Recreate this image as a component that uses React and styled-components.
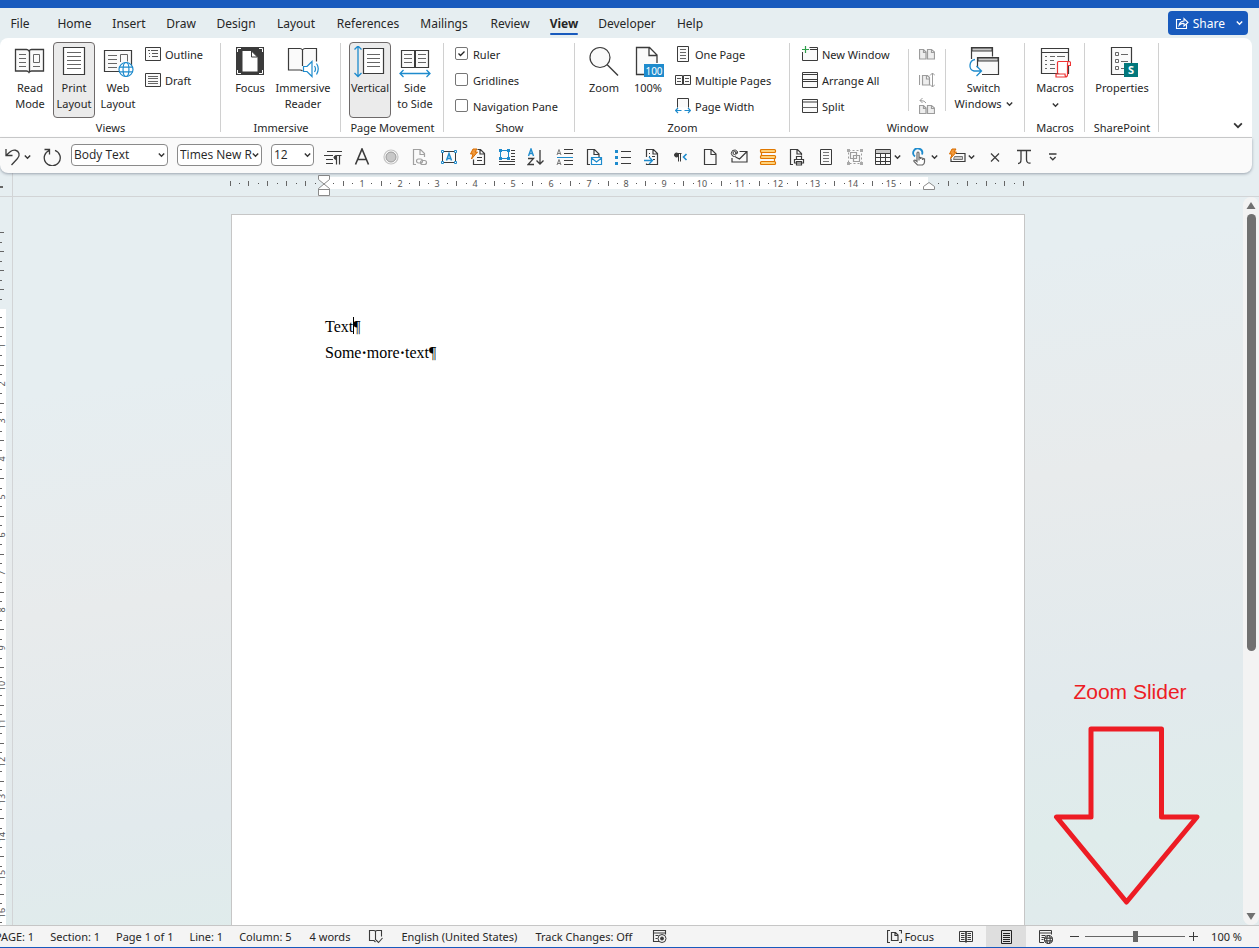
import React, { useState } from 'react';
import styled, { createGlobalStyle } from 'styled-components';

const GlobalStyle = createGlobalStyle`
    * { box-sizing: border-box; }
    body {
        margin: 0;
        font-family: "Noto Sans", "Open Sans", sans-serif;
        font-size: 11px;
        color: #262626;
    }
    button, select, input {
        font-family: inherit;
        font-size: inherit;
        color: inherit;
        margin: 0;
    }
`;

const Window = styled.div`
    min-height: 100vh;
    display: flex;
    flex-direction: column;
    overflow: hidden;
    border-top: 8px solid #185abd;
    border-bottom: 1px solid #185abd;
    background: linear-gradient(172deg, #e6eef1 0%, #e6eef1 35%, #e8ebec 55%, #e2eaed 75%, #dfeceb 88%, #e1eaed 100%);
`;

/* ---- tabs ---- */
const TabBar = styled.nav`
    display: flex;
    align-items: center;
    height: 30px;
    padding: 0 11px 0 0;
`;

const Tab = styled.a`
    position: relative;
    width: ${(p) => p.$w}px;
    text-align: center;
    font-size: 12px;
    line-height: 28px;
    padding-top: 2px;
    color: #262626;
    text-decoration: none;
    font-weight: ${(p) => (p.$active ? 700 : 400)};
    &::after {
        content: "";
        display: ${(p) => (p.$active ? 'block' : 'none')};
        position: absolute;
        left: 15px;
        right: 15px;
        bottom: 3px;
        height: 2px;
        border-radius: 1px;
        background: #185abd;
    }
`;

const ShareButton = styled.button`
    display: flex;
    align-items: center;
    gap: 4px;
    height: 24px;
    margin-left: auto;
    padding: 0 5px 0 7px;
    border: 0;
    border-radius: 4px;
    background: #185abd;
    color: #fff;
    font-size: 12px;
    svg:last-child { margin-left: 7px; }
`;

/* ---- ribbon ---- */
const Ribbon = styled.section`
    display: flex;
    height: 100px;
    margin-right: 7px;
    padding-top: 4px;
    background: #fff;
    border-bottom: 1px solid #d0d0d0;
    border-radius: 8px 8px 0 0;
`;

const Group = styled.div`
    position: relative;
    width: ${(p) => p.$w}px;
    height: 94px;
    flex: none;
    display: flex;
    flex-direction: column;
    &::after {
        content: "";
        position: absolute;
        right: 0;
        top: 1px;
        bottom: 4px;
        width: 1px;
        background: #d0d0d0;
    }
`;

const GroupBody = styled.div`
    display: flex;
    gap: 2px;
    height: 78px;
    padding-left: ${(p) => p.$pad || 8}px;
`;

const GroupLabel = styled.div`
    text-align: center;
    line-height: 16px;
`;

const BigButton = styled.button`
    width: ${(p) => p.$w || 42}px;
    height: 76px;
    display: flex;
    flex-direction: column;
    align-items: center;
    padding: 3px 0 0;
    line-height: 16px;
    white-space: nowrap;
    border: 1px solid ${(p) => (p.$on ? '#6e6a6a' : 'transparent')};
    border-radius: 4px;
    background: ${(p) => (p.$on ? '#ebebeb' : 'transparent')};
    svg { flex: none; }
    > svg:first-child { margin-bottom: 2px; }
`;

const Inline = styled.span`
    display: inline-flex;
    align-items: center;
    gap: 4px;
`;

const Stack = styled.div`
    display: flex;
    flex-direction: column;
    margin-top: -1px;
    margin-left: ${(p) => p.$left || 0}px;
`;

const SmallButton = styled.button`
    height: 26px;
    display: flex;
    align-items: center;
    gap: 4px;
    padding: 0;
    border: 0;
    background: none;
    white-space: nowrap;
    svg { flex: none; }
`;

const Check = styled.label`
    height: 26px;
    display: flex;
    align-items: center;
    gap: 5px;
    white-space: nowrap;
    input {
        appearance: none;
        width: 13px;
        height: 13px;
        margin-bottom: 2px;
        border: 1px solid #767676;
        border-radius: 2px;
        background: #fff;
    }
    input:checked {
        background: url("data:image/svg+xml,%3Csvg xmlns='http://www.w3.org/2000/svg' viewBox='0 0 11 11'%3E%3Cpath d='M2.5 5.5l2 2 4-4' fill='none' stroke='%23222' stroke-width='1.3'/%3E%3C/svg%3E");
    }
`;

const Divider = styled.div`
    width: 1px;
    height: 62px;
    margin: 7px 0 0 ${(p) => p.$left}px;
    background: #d0d0d0;
`;

const Collapse = styled.button`
    align-self: flex-end;
    margin: 0 7px 3px auto;
    padding: 0;
    width: 14px;
    height: 18px;
    border: 0;
    background: none;
`;

/* ---- quick access toolbar ---- */
const Toolbar = styled.section`
    display: flex;
    align-items: center;
    height: 35px;
    margin-right: 7px;
    padding: 2px 0 0 1px;
    background: #fafafa;
    border-radius: 0 0 8px 8px;
    box-shadow: 0 1px 3px rgba(60, 70, 90, 0.45);
    position: relative;
`;

const Tool = styled.button`
    width: ${(p) => p.$w || 29}px;
    height: 28px;
    flex: none;
    display: flex;
    align-items: center;
    justify-content: center;
    gap: 2px;
    padding: 0;
    border: 0;
    background: none;
`;

const Combos = styled.div`
    display: flex;
    gap: 9px;
    flex: none;
    margin: 0 4px 4px 1px;
`;

const Combo = styled.div`
    position: relative;
    width: ${(p) => p.$w}px;
    select {
        appearance: none;
        display: block;
        width: 100%;
        height: 22px;
        padding: 0 9px 0 2px;
        border: 1px solid #8a8a8a;
        border-radius: 4px;
        background: #fff;
        font-family: "Open Sans", sans-serif;
        font-size: 12px;
        white-space: nowrap;
        text-overflow: clip;
    }
    svg {
        position: absolute;
        right: 3px;
        top: 8px;
        pointer-events: none;
    }
`;

/* ---- rulers and document ---- */
const RulerRow = styled.div`
    display: flex;
    height: 24px;
    border-bottom: 1px solid #d2d4d6;
`;

const RulerCorner = styled.div`
    width: 13px;
    flex: none;
    border-right: 1px solid #d2d4d6;
    &::before {
        content: "";
        display: block;
        width: 3px;
        height: 2px;
        margin-top: 13px;
        background: #666;
    }
`;

const RulerTrack = styled.div`
    flex: 1;
    display: flex;
    justify-content: center;
    padding-right: 16px;
    svg { overflow: visible; }
`;

const Workspace = styled.div`
    flex: 1;
    display: flex;
    position: relative;
    min-height: 300px;
`;

const SideRuler = styled.div`
    width: 13px;
    flex: none;
    border-right: 1px solid #d2d4d6;
    position: relative;
    overflow: hidden;
    svg { position: absolute; left: 0; top: 0; }
`;

const Canvas = styled.main`
    flex: 1;
    display: flex;
    justify-content: center;
    padding-top: 17px;
`;

const Page = styled.article`
    width: 794px;
    padding: 99px 93px 0;
    background: #fff;
    border: 1px solid #c6c6c6;
    border-bottom: 0;
    font-family: "Liberation Serif", serif;
    font-size: 16px;
    line-height: 26px;
    color: #000;
    p { margin: 0; }
`;

const SpaceMark = styled.span`
    font-weight: 700;
`;

const Caret = styled.i`
    display: inline-block;
    width: 1px;
    height: 17px;
    margin-right: -1px;
    vertical-align: -2px;
    background: #000;
`;

const ScrollBar = styled.div`
    width: 16px;
    flex: none;
    display: flex;
    flex-direction: column;
    align-items: center;
    padding: 5px 0 5px;
    background: #f3f3f3;
    border-radius: 8px;
`;

const ScrollThumb = styled.div`
    width: 9px;
    flex: 0 1 437px;
    margin: 4px 0 auto;
    border-radius: 5px;
    background: #707070;
`;

const Callout = styled.div`
    position: absolute;
    right: 59px;
    bottom: 18px;
    width: 148px;
    display: flex;
    flex-direction: column;
    align-items: center;
    gap: 21px;
    font-family: "Liberation Sans", sans-serif;
    font-size: 21px;
    line-height: 24px;
    color: #ed1c24;
    span { margin-left: 8px; }
`;

/* ---- status bar ---- */
const StatusBar = styled.footer`
    display: flex;
    align-items: center;
    height: 22px;
    background: #f4f4f4;
    border-top: 1px solid #c6c6c6;
    white-space: nowrap;
    overflow: hidden;
`;

const StatusItem = styled.button`
    height: 21px;
    display: flex;
    align-items: center;
    gap: 2px;
    padding: 0;
    margin-left: ${(p) => (p.$push ? 'auto' : `${p.$left}px`)};
    margin-right: ${(p) => p.$right || 0}px;
    border: 0;
    background: none;
    line-height: 20px;
`;

const ViewButton = styled.button`
    width: 40px;
    height: 21px;
    flex: none;
    display: flex;
    align-items: center;
    justify-content: center;
    padding: 0;
    border: 0;
    background: ${(p) => (p.$on ? '#dedede' : 'none')};
`;

const ZoomControl = styled.div`
    display: flex;
    align-items: center;
    gap: 4px;
    margin-left: 4px;
    button {
        width: 11px;
        height: 20px;
        padding: 0;
        border: 0;
        background: none;
        display: flex;
        align-items: center;
    }
    input {
        appearance: none;
        width: 100px;
        height: 12px;
        background: linear-gradient(#666, #666) center / 100% 1px no-repeat;
    }
    input::-webkit-slider-thumb {
        appearance: none;
        width: 5px;
        height: 11px;
        background: #666;
    }
`;

const D = '#3b3b3b';
const B = '#1e8bcd';

function Icon({ w = 16, h = w, c = D, children }) {
    return (
        <svg width={w} height={h} viewBox={`0 0 ${w} ${h}`} fill="none" stroke={c} aria-hidden="true">
            {children}
        </svg>
    );
}

const Chevron = ({ w = 7, c = '#333', t = 1.4 }) => (
    <svg width={w} height={w - 1} viewBox="0 0 7 6" fill="none" stroke={c} strokeWidth={t} aria-hidden="true">
        <path d="M.8 1.5l2.7 2.7 2.7-2.7" />
    </svg>
);

const Globe = ({ x, y, r, c = B, t = 1.2 }) => (
    <g stroke={c} strokeWidth={t}>
        <circle cx={x} cy={y} r={r} fill="#fff" />
        <ellipse cx={x} cy={y} rx={r * 0.42} ry={r} />
        <path d={`M${x - r} ${y - r * 0.35}h${2 * r}M${x - r} ${y + r * 0.35}h${2 * r}`} />
    </g>
);

/* large ribbon icons */
const ReadMode = () => (
    <Icon w={32}>
        <path d="M1.500 3.500h11q1.500 0 2.500 1.500q1-1.500 2.500-1.500h12v21.500h-12q-1.500 0-2.500 1.500q-1-1.500-2.500-1.500h-11z" fill="#fafafa" strokeWidth="1.300" />
        <path d="M15.500 5v21" strokeWidth="1.300" />
        <path d="M5 8.500h7M5 12.500h7M5 16.500h7M5 20.500h7M19 20.500h7M19.500 8.500h6v8h-6z" stroke="#666" />
    </Icon>
);

const PrintLayout = () => (
    <Icon w={32}>
        <path d="M5.500 1.500h21v27h-21z" fill="#fff" strokeWidth="1.200" />
        <path d="M9 6.500h14M9 10.500h14M9 14.500h14M9 18.500h14M9 22.500h14" stroke="#666" />
    </Icon>
);

const WebLayout = () => (
    <Icon w={32}>
        <path d="M2.500 4.500h27v21h-27z" fill="#fafafa" strokeWidth="1.200" />
        <path d="M6 9.500h9M6 13.500h9M6 17.500h9M6 21.500h9M18.500 16v-7.500h7v7" stroke="#666" />
        <Globe x={24} y={23.500} r={7} />
    </Icon>
);

const FocusMode = () => (
    <Icon w={32}>
        <path d="M2 1h28v28h-28z" fill={D} stroke="none" />
        <path d="M3.500 6v-3.500h3.500M25 2.500h3.500v3.500M3.500 24v3.500h3.500M25 27.500h3.500v-3.500" stroke="#fff" />
        <path d="M8.500 5h9l6 6v14.500h-15z" fill="#fff" stroke="none" />
        <path d="M17.500 5v6h6z" stroke={D} />
    </Icon>
);

const ImmersiveReader = () => (
    <Icon w={32}>
        <path d="M15.500 25q-1-1-2.500-1h-11.500v-21.500h11.500q1.500 0 2.500 1.500q1-1.500 2.500-1.500h11.500v13M15.500 4v16" fill="#fafafa" strokeWidth="1.200" />
        <path d="M16.500 20.500h3.500l5-5v15l-5-5h-3.500z" fill="#fff" stroke={B} strokeWidth="1.200" />
        <path d="M27.500 20q2 3 0 6M29.500 17.500q3.500 5 0 11" stroke={B} strokeWidth="1.200" />
    </Icon>
);

const Vertical = () => (
    <Icon w={32}>
        <path d="M9.500 2.500h20v25h-20z" fill="#fff" strokeWidth="1.200" />
        <path d="M13 8.500h13M13 12.500h13M13 16.500h13M13 20.500h13" stroke="#666" />
        <path d="M4 .5v29.500M.5 3.500l3.500-3.500l3.500 3.500M.5 27l3.500 3.500l3.500-3.500" stroke={B} strokeWidth="1.300" />
    </Icon>
);

const SideToSide = () => (
    <Icon w={32}>
        <path d="M2.500 4.500h27v17h-27z" fill="#fafafa" strokeWidth="1.200" />
        <path d="M16 4v18" strokeWidth="2" />
        <path d="M5 8.500h8M5 12.500h8M5 16.500h8M19 8.500h8M19 12.500h8M19 16.500h8" stroke="#666" />
        <path d="M1 27.500h30M4.500 24l-3.500 3.500l3.500 3.500M27.500 24l3.500 3.500l-3.500 3.500" stroke={B} strokeWidth="1.300" />
    </Icon>
);

const ZoomGlass = () => (
    <Icon w={32}>
        <circle cx="12" cy="11.500" r="10" fill="#fafafa" strokeWidth="1.200" />
        <path d="M19 18.500l11 11" strokeWidth="1.400" />
    </Icon>
);

const Hundred = () => (
    <Icon w={32}>
        <path d="M12 28.500h-7.500v-27h13l7.500 7.500v8M17 1.500v8h8" fill="#fafafa" strokeWidth="1.300" />
        <rect x="12" y="18" width="20" height="13" fill={B} stroke="none" />
        <text x="22" y="28.500" fontSize="10" textAnchor="middle" fill="#fff" stroke="none">100</text>
    </Icon>
);

const SwitchWindows = () => (
    <Icon w={32}>
        <path d="M3.500 13v-11.500h21v9" fill="#fafafa" strokeWidth="1.200" />
        <path d="M4 2h20v3h-20z" fill="#c8c8c8" />
        <path d="M14 28.500h16.500v-17h-21v10" fill="#fafafa" strokeWidth="1.200" />
        <path d="M10 12h20v3h-20z" fill="#c8c8c8" />
        <path d="M7 13.500c-6 1-7 10-1 11.500h7M8.500 20l5 5l-5 5" stroke={B} strokeWidth="1.300" />
    </Icon>
);

const Macros = () => (
    <Icon w={32}>
        <path d="M2.500 2.500h27v25h-27zM2.500 6.500h27" fill="#fafafa" strokeWidth="1.200" />
        <path d="M6 10.500h2M11 10.500h5M18 10.500h8M6 14.500h2M11 14.500h4M6 18.500h2M11 18.500h5M6 22.500h2M11 22.500h5" stroke="#666" />
        <path d="M18.500 27v-10.500q0-1 1-1h10.500q1.500 0 1.500 1.500v2.500h-3v9q0 2.500-2 2.500h-9.500v-3h9q0 3 1.500 3M28.500 19.500v-2q0-2 1.500-2" fill="#fff" stroke="#e33" strokeWidth="1.200" />
    </Icon>
);

const Properties = () => (
    <Icon w={32}>
        <path d="M5.500 1.500h20v27h-20z" fill="#fafafa" strokeWidth="1.200" />
        <path d="M9.500 6.500h3v3h-3zM9.500 13.500h3v3h-3zM9.500 20.500h3v3h-3zM15 8.500h7M15 15.500h7M15 22.500h3" stroke="#666" />
        <rect x="18" y="17" width="14" height="14" fill="#03787c" stroke="none" />
        <text x="25" y="28" fontSize="11" fontWeight="700" textAnchor="middle" fill="#fff" stroke="none">S</text>
    </Icon>
);

/* small ribbon icons */
const Outline = () => (
    <Icon>
        <path d="M.5 1.500h15v13h-15z" fill="#fafafa" />
        <path d="M3 4.500h2M6 4.500h7M4 7.500h1M7 7.500h6M4 10.500h1M7 10.500h6" stroke="#555" />
    </Icon>
);
const Draft = () => (
    <Icon>
        <path d="M.5 1.500h15v13h-15z" fill="#fafafa" />
        <path d="M3 4.500h10M3 6.500h10M3 9.500h10M3 11.500h10" stroke="#666" />
    </Icon>
);
const OnePage = () => (
    <Icon>
        <path d="M2.500.5h11v15h-11z" fill="#fafafa" />
        <path d="M5 3.500h6M5 6.500h6M5 9.500h6M5 12.500h6" stroke="#666" />
    </Icon>
);
const MultiPages = () => (
    <Icon>
        <path d="M.5 3.500h7v9h-7zM8.500 3.500h7v9h-7z" fill="#fafafa" />
        <path d="M2 6.500h4M2 9.500h4M10 6.500h4M10 9.500h4" stroke="#555" />
    </Icon>
);
const PageWidth = () => (
    <Icon>
        <path d="M2.500 9.500v-9h11v9" fill="#fafafa" />
        <path d="M.5 12.500h6M9.500 12.500h6M3 10l-2.500 2.500l2.500 2.500M13 10l2.500 2.500l-2.500 2.500" stroke={B} strokeWidth="1.200" />
    </Icon>
);
const NewWindow = () => (
    <Icon>
        <path d="M.5 6v8.500h15v-13h-8M8 3.500h8" fill="#fafafa" />
        <path d="M3.500 0v7M0 3.500h7" stroke="#2e9e4a" strokeWidth="1.200" />
    </Icon>
);
const ArrangeAll = () => (
    <Icon>
        <path d="M.5.5h15v15h-15z" fill="#fafafa" />
        <path d="M.5 2.500h15M.5 7.500h15M.5 9.500h15" />
    </Icon>
);
const Split = () => (
    <Icon>
        <path d="M.5 1.500h15v13h-15zM.5 4h15" fill="#fafafa" />
        <path d="M.5 9.500h15" stroke="#666" />
    </Icon>
);
const GreyPages = ({ kind }) => (
    <Icon c="#9c9c9c">
        {kind === 'side' && <path d="M.5 3.500h4l2.500 2.500v7h-6.500zM8.500 3.500h4l3 2.500v7h-7zM4.500 3.500v3h3M12.500 3.500v3h3" fill="#eee" strokeWidth="1.200" />}
        {kind === 'sync' && (
            <>
                <path d="M.5 3v10M3.500 3.500h5l2 2v7.500h-7zM7.500 4v3h3" fill="#eee" strokeWidth="1.200" />
                <path d="M13.500 1v14M11 3.500l2.500-2.500l2.500 2.500M11 12.500l2.500 2.500l2.500-2.500" />
            </>
        )}
        {kind === 'reset' && (
            <>
                <path d="M.5 7.500h4l2.500 2.500v5.500h-6.500zM8.500 7.500h4l3 2.500v5.500h-7zM4.500 7.500v3h3M12.500 7.500v3h3" fill="#eee" strokeWidth="1.200" />
                <path d="M7 5q-1-2.500-6-2.500M3.500 0l-2.500 2.500l2.500 2.500" />
            </>
        )}
    </Icon>
);

/* toolbar icons, 18px box */
const Undo = () => (
    <Icon w={18}>
        <path d="M2 1v6.500h6.500M2.500 7l4-3.500c3-2.500 7.500-1.500 8.500 2c.5 2 0 3.500-1.500 5l-6 6.500" strokeWidth="1.300" />
    </Icon>
);
const Redo = () => (
    <Icon w={18}>
        <path d="M1.500 1.500h5v5M6.500 2.300a8 8 0 1 0 5.500 0" strokeWidth="1.300" />
    </Icon>
);
const Glyph = ({ name }) => {
    switch (name) {
        case 'Text direction':
            return <><path d="M3 3.500h15M0 7.500h9M2 11.500h7M2 15.500h7" /><path d="M12.500 8v8.500M15.500 8v8.500M17.500 7.500h-5" strokeWidth="1.200" /><path d="M12.500 7.500q-2.500 0-2.500 2t2.500 2z" fill={D} /></>;
        case 'Font':
            return <path d="M2.500 16.500l6.500-15.500l6.500 15.500M4.500 11.500h9" strokeWidth="1.600" />;
        case 'Record':
            return <><circle cx="9" cy="9" r="7" stroke="#c4c4c4" strokeWidth="1.200" /><circle cx="9" cy="9" r="5" fill="#c8c8c8" stroke="#999" /></>;
        case 'Link document':
            return <g stroke="#a0a0a0"><path d="M5 16.500h-2.500v-15h7l4 4v3.500M9 1.500v5h4.500" strokeWidth="1.200" /><rect x="5.500" y="11" width="6" height="4" rx="2" strokeWidth="1.200" /><rect x="9.500" y="12.500" width="6" height="4" rx="2" strokeWidth="1.200" /></g>;
        case 'Text box':
            return <><path d="M2.500 3.500h13v11h-13z" /><path d="M1.500 2.500h2v2h-2zM14.500 2.500h2v2h-2zM1.500 13.500h2v2h-2zM14.500 13.500h2v2h-2z" fill="#fff" stroke={B} /><path d="M6.500 12.500l2.500-7l2.500 7M7.500 10.500h3" stroke={B} strokeWidth="1.500" /></>;
        case 'Quick document':
            return <><path d="M8.500 1.500h3l4 4v11h-11v-5M11 1.500v4.500h4.500M8 9.500h5M8 12.500h5" strokeWidth="1.200" /><path d="M4 1h4l-2 3h2.500l-6 7l1.500-5h-2.500z" fill="#f29a3c" stroke="#d86c00" /></>;
        case 'Wrap text':
            return <><path d="M13 2.500h4M13 5.500h4M13 8.500h4M13 11.500h4M1 13.500h16M1 16.500h16" /><path d="M2.500 2.500h8v8h-8z" stroke={B} /><path d="M1 1h3v3h-3zM9 1h3v3h-3zM1 9h3v3h-3zM9 9h3v3h-3z" fill={B} stroke="none" /></>;
        case 'Sort':
            return <><path d="M1.500 8l2.500-7l2.500 7M2 5.500h4" stroke={B} strokeWidth="1.400" /><path d="M1 10.500h5.500l-5.500 6h6M13 2v14M9.500 12.500l3.500 3.500l3.500-3.500" strokeWidth="1.300" /></>;
        case 'Line spacing':
            return <><path d="M8 1.500h9M8 5.500h9M8 12.500h9M8 16.500h9" /><path d="M1 9.500h16" stroke={B} /><path d="M1 7l2-5.500l2 5.500M1.500 5.500h3M1 17l2-5.500l2 5.500M1.500 15.500h3" stroke="#777" /></>;
        case 'Mail document':
            return <><path d="M5 16.500h-2.500v-15h7l4.500 4.500v3M9 1.500v5h5" strokeWidth="1.200" /><path d="M6.500 9.500h10v7h-10zM6.500 10l5 4l5-4" stroke={B} strokeWidth="1.200" fill="#fff" /></>;
        case 'Bullets':
            return <><path d="M7 3.500h10M7 9.500h10M7 15.500h10" strokeWidth="1.200" /><path d="M1 2h3v3h-3zM1 8h3v3h-3zM1 14h3v3h-3z" fill={B} stroke="none" /></>;
        case 'Insert file':
            return <><path d="M3.500 9v-7.500h7l4 4v11h-11v-1M10 1.500v4.500h4.500M6 5.500h1M6 8.500h1M9 8.500h3M10 11.500h2" strokeWidth="1.200" /><path d="M1 12.500h8M6 9l3.500 3.500l-3.500 3.500" stroke={B} strokeWidth="1.300" /></>;
        case 'Right to left':
            return <><path d="M6.500 5v8.500M8.500 5v8.500M9.500 5.500h-4" /><circle cx="4.500" cy="7" r="2" fill={D} /><path d="M14.500 6l-3 3l3 3" stroke={B} strokeWidth="1.600" /></>;
        case 'New':
            return <path d="M3.500 1.500h7l4.500 4.500v10.500h-11.500zM10 1.500v5h5" strokeWidth="1.200" />;
        case 'Envelope':
            return <><path d="M9.500 3.500h7.500v10.500h-15v-4M16.500 4l-7 7l-4-2" strokeWidth="1.200" /><circle cx="4.500" cy="5" r="1.500" /><path d="M6 3.500v2.500q2 0 1.500-2.500q-2-2.500-5-1q-2.500 3 0 5.500q2 1 3.500 0" /></>;
        case 'Bars':
            return <g fill="#ffd27a" stroke="#e07800" strokeWidth="1.200"><rect x="1.500" y="1.500" width="15" height="3" rx="1" /><rect x="1.500" y="7.500" width="15" height="3" rx="1" /><rect x="1.500" y="13.500" width="15" height="3" rx="1" /><path d="M2.500 4.500v3M15.500 10.500v3" /></g>;
        case 'Print document':
            return <><path d="M5 16.500h-2.500v-15h7l4 4v2M9 1.500v4.500h4.500" strokeWidth="1.200" /><path d="M8.500 11v-2.500h5v2.500M6.500 11.500h9v3.500h-9zM8.500 13.500h5v3.500h-5z" fill="#fff" strokeWidth="1.200" /></>;
        case 'Page':
            return <><path d="M3.500 1.500h11v15h-11z" /><path d="M6 4.500h6M6 7.500h6M6 10.500h6M6 13.500h6" stroke="#777" /></>;
        case 'Group':
            return <g stroke="#9c9c9c"><path d="M2.500 2.500h13v13h-13z" strokeDasharray="2 2" /><path d="M1 1h3v3h-3zM14 1h3v3h-3zM1 14h3v3h-3zM14 14h3v3h-3z" fill="#aaa" stroke="none" /><path d="M4.500 4.500h6v6h-6zM7.500 7.500h6v6h-6z" strokeWidth="1.200" /></g>;
        case 'Table':
            return <><path d="M1.500 2h15v3h-15z" fill="#c8c8c8" stroke="none" /><path d="M1.500 1.500h15v15h-15zM1.500 5.500h15M1.500 9.500h15M1.500 13.500h15M6.500 5v12M11.500 5v12" /></>;
        case 'Touch':
            return <><path d="M4 8.500a4.500 4.500 0 1 1 7-2" stroke={B} strokeWidth="1.800" /><path d="M8 12.500v-7q0-1.500-1-1.500t-1 1.500v8l-2-1.500q-1.500 0-1 1.500l3.500 3.500h5q2-1 2-3v-3l-5.500-2M9.500 9v2M11.500 10v2" stroke="#666" fill="#fff" strokeWidth="1.200" /></>;
        case 'Lightning':
            return <><path d="M8 5.500h9v8h-14v-3" strokeWidth="1.200" /><path d="M6.500 8.500h8v3h-9z" fill="#ccc" stroke="#777" /><path d="M4 1h4l-2 3h2.500l-6 6.500l1.500-4.500h-2.500z" fill="#f29a3c" stroke="#d86c00" /></>;
        case 'Delete':
            return <path d="M5 5.500l8 8M13 5.500l-8 8" strokeWidth="1.200" />;
        case 'Equation':
            return <path d="M2 2.500h14M6 2.500v9q0 4-3 4M11.500 2.500v9q0 4 4 3.500" strokeWidth="1.300" />;
        default:
            return <path d="M5 6h7.500M6 9l2.800 2.800l2.800-2.800" strokeWidth="1.300" />;
    }
};

/* status bar icons */
const Proofing = () => (
    <Icon w={15}>
        <path d="M7.500 13l-1.500-1.500h-4.500v-10h4.500q1.500 0 1.500 1.500q0-1.500 1.500-1.500h4.500v6M7.500 3v8M8 11l2.500 2.500l4-4.500" strokeWidth="1.100" />
    </Icon>
);
const MacroRec = () => (
    <Icon w={15}>
        <path d="M7 12.500h-5.500v-11h12v4M1.500 4h12M3.500 6.500h3M3.500 9.500h2" strokeWidth="1.100" />
        <circle cx="10" cy="9.500" r="4" /><circle cx="10" cy="9.500" r="1.500" fill={D} />
    </Icon>
);
const FocusSmall = () => (
    <Icon w={15}>
        <path d="M3 1.500h-2.500v12h2.500M12 1.500h2.500v3M12 13.500h2.500v-3M4.500 3.500h4l2.500 2.500v5.500h-6.500zM8 3.500v3h3" strokeWidth="1.200" />
    </Icon>
);
const BookSmall = () => (
    <Icon w={14} h={13}>
        <path d="M.5 1.500h6.500v10h-6.500zM7 1.500h6.500v10h-6.500zM7 1v12M2 3.500h3.500M2 5.500h3.500M2 7.500h3.500M2 9.500h3.500M8.500 3.500h3.500M8.500 5.500h3.500M8.500 7.500h3.500M8.500 9.500h3.500" />
    </Icon>
);
const PageSmall = () => (
    <Icon w={11} h={14}>
        <path d="M.5.5h10v13h-10zM2 3.500h7M2 5.500h7M2 7.500h7M2 9.500h7M2 11.500h7" stroke="#222" />
    </Icon>
);
const WebSmall = () => (
    <Icon w={15} h={14}>
        <path d="M5 12.500h-4.500v-12h12v4M.5 3h12M2.500 5.500h4M2.500 7.500h3M2.500 9.500h2" />
        <Globe x={9.500} y={9.500} r={4} c={D} t={1.100} />
    </Icon>
);

const CM = 37.8;

function TopRuler() {
    const ticks = [];
    for (let i = -10; i <= 74; i++) {
        const x = Math.round(93 + (i * CM) / 4);
        if (i === 0 || i === 64) continue;
        if (i % 4 === 0 && i > 0 && i < 64) {
            ticks.push(<text key={i} x={x} y="14" textAnchor="middle">{i / 4}</text>);
        } else if (i % 2 === 0) {
            ticks.push(<path key={i} d={`M${x + 0.5} 8v5`} stroke="#666" />);
        } else {
            ticks.push(<path key={i} d={`M${x + 0.5} 10v1`} stroke="#555" />);
        }
    }
    return (
        <svg width="794" height="23" viewBox="0 0 794 23" fontSize="9" fill="#555">
            <rect x="93" y="4" width="604" height="12" fill="#fff" />
            {ticks}
            <g fill="#fff" stroke="#8a8a8a">
                <path d="M87.500 2.500h11v4l-5.500 4.500l-5.500-4.500z" />
                <path d="M93 11l5.500 4.500v7h-11v-7z" />
                <path d="M87.500 16.500h11" />
                <path d="M698 9.500l5.500 4v3h-11v-3z" />
            </g>
        </svg>
    );
}

function LeftRuler() {
    const ticks = [];
    for (let i = -8; i <= 72; i++) {
        const y = Math.round(111 + (i * CM) / 4);
        if (i === 0) continue;
        if (i % 4 === 0 && i > 0) {
            ticks.push(<text key={i} transform={`translate(5 ${y}) rotate(-90)`} textAnchor="middle">{i / 4}</text>);
        } else {
            ticks.push(<path key={i} d={`M0 ${y + 0.5}h${i % 2 === 0 ? 4 : 2}`} stroke="#666" />);
        }
    }
    return (
        <svg width="12" height="800" viewBox="0 0 12 800" fontSize="9" fill="#555">
            <rect x="0" y="112" width="6" height="688" fill="#fff" />
            {ticks}
        </svg>
    );
}

const tabs = [
    ['File', 40], ['Home', 69], ['Insert', 40], ['Draw', 64], ['Design', 46], ['Layout', 74], ['References', 70],
    ['Mailings', 82], ['Review', 50], ['View', 58], ['Developer', 68], ['Help', 58],
];

const tools = [
    'Text direction', 'Font', 'Record', 'Link document', 'Text box', 'Quick document', 'Wrap text', 'Sort',
    'Line spacing', 'Mail document', 'Bullets', 'Insert file', 'Right to left', 'New', 'Envelope', 'Bars',
    'Print document', 'Page', 'Group',
];

const Big = ({ icon, lines, ...rest }) => (
    <BigButton {...rest}>
        {icon}
        {lines.map((line, i) => <span key={i}>{line}</span>)}
    </BigButton>
);

export default function App() {
    const [active, setActive] = useState('View');
    const [checks, setChecks] = useState({ Ruler: true, Gridlines: false, 'Navigation Pane': false });
    const [zoom, setZoom] = useState(100);

    return (
        <Window>
            <GlobalStyle />
            <TabBar>
                {tabs.map(([name, w]) => (
                    <Tab key={name} href="#" $w={w} $active={name === active} onClick={() => setActive(name)}>{name}</Tab>
                ))}
                <ShareButton>
                    <Icon w={14} c="#fff">
                        <path d="M6 3.500h-4.500v9h10v-4M4 9.500q.5-4 5-4.500v-2.500l4 4l-4 3.500v-2.500q-3-.5-5 2z" strokeWidth="1.100" />
                    </Icon>
                    Share
                    <Chevron c="#fff" />
                </ShareButton>
            </TabBar>

            <Ribbon>
                <Group $w={221}>
                    <GroupBody $pad={9}>
                        <Big icon={<ReadMode />} lines={['Read', 'Mode']} />
                        <Big $on icon={<PrintLayout />} lines={['Print', 'Layout']} />
                        <Big icon={<WebLayout />} lines={['Web', 'Layout']} />
                        <Stack $left={4}>
                            <SmallButton><Outline />Outline</SmallButton>
                            <SmallButton><Draft />Draft</SmallButton>
                        </Stack>
                    </GroupBody>
                    <GroupLabel>Views</GroupLabel>
                </Group>
                <Group $w={120}>
                    <GroupBody>
                        <Big icon={<FocusMode />} lines={['Focus']} />
                        <Big $w={60} icon={<ImmersiveReader />} lines={['Immersive', 'Reader']} />
                    </GroupBody>
                    <GroupLabel>Immersive</GroupLabel>
                </Group>
                <Group $w={103}>
                    <GroupBody>
                        <Big $on icon={<Vertical />} lines={['Vertical']} />
                        <Big icon={<SideToSide />} lines={['Side', 'to Side']} $w={44} />
                    </GroupBody>
                    <GroupLabel>Page Movement</GroupLabel>
                </Group>
                <Group $w={131}>
                    <GroupBody $pad={11}>
                        <Stack>
                            {Object.keys(checks).map((name) => (
                                <Check key={name}>
                                    <input
                                        type="checkbox"
                                        checked={checks[name]}
                                        onChange={() => setChecks({ ...checks, [name]: !checks[name] })}
                                    />
                                    {name}
                                </Check>
                            ))}
                        </Stack>
                    </GroupBody>
                    <GroupLabel>Show</GroupLabel>
                </Group>
                <Group $w={215}>
                    <GroupBody>
                        <Big icon={<ZoomGlass />} lines={['Zoom']} />
                        <Big icon={<Hundred />} lines={['100%']} />
                        <Stack $left={4}>
                            <SmallButton><OnePage />One Page</SmallButton>
                            <SmallButton><MultiPages />Multiple Pages</SmallButton>
                            <SmallButton><PageWidth />Page Width</SmallButton>
                        </Stack>
                    </GroupBody>
                    <GroupLabel>Zoom</GroupLabel>
                </Group>
                <Group $w={235}>
                    <GroupBody $pad={12}>
                        <Stack>
                            <SmallButton><NewWindow />New Window</SmallButton>
                            <SmallButton><ArrangeAll />Arrange All</SmallButton>
                            <SmallButton><Split />Split</SmallButton>
                        </Stack>
                        <Divider $left={16} />
                        <Stack $left={8}>
                            <SmallButton aria-label="View Side by Side"><GreyPages kind="side" /></SmallButton>
                            <SmallButton aria-label="Synchronous Scrolling"><GreyPages kind="sync" /></SmallButton>
                            <SmallButton aria-label="Reset Window Position"><GreyPages kind="reset" /></SmallButton>
                        </Stack>
                        <Divider $left={8} />
                        <Big $w={72} icon={<SwitchWindows />} lines={['Switch', <Inline>Windows<Chevron /></Inline>]} />
                    </GroupBody>
                    <GroupLabel>Window</GroupLabel>
                </Group>
                <Group $w={60}>
                    <GroupBody>
                        <Big $w={44} icon={<Macros />} lines={['Macros', <Inline><Chevron /></Inline>]} />
                    </GroupBody>
                    <GroupLabel>Macros</GroupLabel>
                </Group>
                <Group $w={74}>
                    <GroupBody>
                        <Big $w={58} icon={<Properties />} lines={['Properties']} />
                    </GroupBody>
                    <GroupLabel>SharePoint</GroupLabel>
                </Group>
                <Collapse aria-label="Collapse ribbon"><Chevron w={10} t={1.2} /></Collapse>
            </Ribbon>

            <Toolbar>
                <Tool $w={33} aria-label="Undo"><Undo /><Chevron /></Tool>
                <Tool $w={36} aria-label="Redo"><Redo /></Tool>
                <Combos>
                    <Combo $w={97}>
                        <select aria-label="Style"><option>Body Text</option></select>
                        <Chevron />
                    </Combo>
                    <Combo $w={85}>
                        <select aria-label="Font"><option>Times New R</option></select>
                        <Chevron />
                    </Combo>
                    <Combo $w={43}>
                        <select aria-label="Font size"><option>12</option></select>
                        <Chevron />
                    </Combo>
                </Combos>
                {tools.map((name) => (
                    <Tool key={name} aria-label={name}><Icon w={18}><Glyph name={name} /></Icon></Tool>
                ))}
                {['Table', 'Touch', 'Lightning'].map((name) => (
                    <Tool key={name} $w={37} aria-label={name}><Icon w={18}><Glyph name={name} /></Icon><Chevron /></Tool>
                ))}
                {['Delete', 'Equation', 'Customize'].map((name) => (
                    <Tool key={name} aria-label={name}><Icon w={18}><Glyph name={name} /></Icon></Tool>
                ))}
            </Toolbar>

            <RulerRow>
                <RulerCorner />
                <RulerTrack><TopRuler /></RulerTrack>
            </RulerRow>

            <Workspace>
                <SideRuler><LeftRuler /></SideRuler>
                <Canvas>
                    <Page>
                        <p>Text<Caret />¶</p>
                        <p>Some<SpaceMark>·</SpaceMark>more<SpaceMark>·</SpaceMark>text¶</p>
                    </Page>
                </Canvas>
                <ScrollBar>
                    <svg width="10" height="8" viewBox="0 0 10 8" fill="#707070"><path d="M5 0l4.500 7h-9z" /></svg>
                    <ScrollThumb />
                    <svg width="10" height="8" viewBox="0 0 10 8" fill="#707070"><path d="M5 8l4.500-7h-9z" /></svg>
                </ScrollBar>
                <Callout>
                    <span>Zoom Slider</span>
                    <svg width="148" height="182" viewBox="0 0 148 182" fill="none" stroke="#ed1c24" strokeWidth="5" strokeLinejoin="round">
                        <path d="M39 4h70.500v88h35.500l-70.500 85l-70-85h34.500z" />
                    </svg>
                </Callout>
            </Workspace>

            <StatusBar>
                <StatusItem $left={-5}>PAGE: 1</StatusItem>
                <StatusItem $left={16}>Section: 1</StatusItem>
                <StatusItem $left={16}>Page 1 of 1</StatusItem>
                <StatusItem $left={16}>Line: 1</StatusItem>
                <StatusItem $left={16}>Column: 5</StatusItem>
                <StatusItem $left={18}>4 words</StatusItem>
                <StatusItem $left={18} aria-label="Proofing"><Proofing /></StatusItem>
                <StatusItem $left={18}>English (United States)</StatusItem>
                <StatusItem $left={18}>Track Changes: Off</StatusItem>
                <StatusItem $left={20} aria-label="Record macro"><MacroRec /></StatusItem>
                <StatusItem $push $right={12}><FocusSmall />Focus</StatusItem>
                <ViewButton aria-label="Read Mode"><BookSmall /></ViewButton>
                <ViewButton $on aria-label="Print Layout"><PageSmall /></ViewButton>
                <ViewButton aria-label="Web Layout"><WebSmall /></ViewButton>
                <ZoomControl>
                    <button aria-label="Zoom out"><Icon w={9}><path d="M0 4.500h9" /></Icon></button>
                    <input type="range" min="10" max="190" value={zoom} aria-label="Zoom level" onChange={(e) => setZoom(+e.target.value)} />
                    <button aria-label="Zoom in"><Icon w={9}><path d="M0 4.500h9M4.500 0v9" /></Icon></button>
                </ZoomControl>
                <StatusItem $left={11} $right={17}>{zoom} %</StatusItem>
            </StatusBar>
        </Window>
    );
}
